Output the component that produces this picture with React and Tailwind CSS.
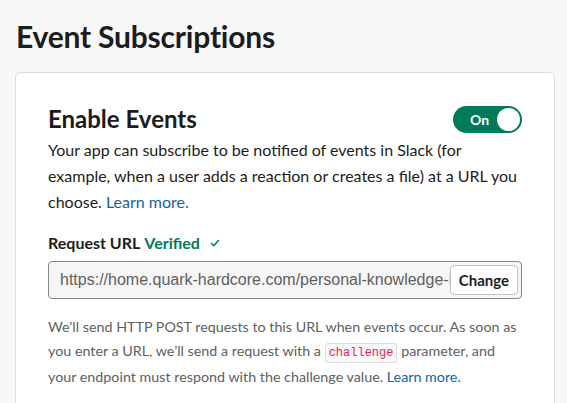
export default function App() {
  return (
    <div className="min-h-screen bg-[#f8f8f8] font-['Lato',sans-serif] text-[#1d1c1d] overflow-hidden h-[403px]">
      <div className="pl-[16px] pr-[12px] pt-[16px]">
        <h1 className="text-[30px] font-bold leading-[40px] tracking-[-0.2px]">Event Subscriptions</h1>

        <section className="mt-[16px] bg-white border border-[#dddddd] rounded-[6px] px-[32px] pt-[30px] pb-[40px] ml-[-1px]">
          <div className="flex items-center justify-between">
            <h2 className="text-[24px] font-bold leading-[32px]">Enable Events</h2>
            <button className="flex items-center justify-between w-[69px] h-[27px] rounded-full bg-[#007a5a] pl-[17px] pr-[2px]">
              <span className="text-white text-[14px] font-bold">On</span>
              <span className="w-[23px] h-[23px] rounded-full bg-white" />
            </button>
          </div>

          <p className="mt-[2px] text-[16px] leading-[26px]">
            Your app can subscribe to be notified of events in Slack (for example, when a user adds a
            reaction or creates a file) at a URL you choose.{" "}
            <a className="text-[#1264a3]">Learn more.</a>
          </p>

          <div className="mt-[16px] flex items-center gap-[4px] text-[16px] font-bold leading-[24px]">
            <span>Request URL</span>
            <span className="text-[#007a5a]">Verified</span>
            <svg className="w-[10px] h-[10px] ml-[6px]" viewBox="0 0 10 10" fill="none">
              <path d="M1.5 5.5l2.2 2.2L8.5 2.5" stroke="#007a5a" strokeWidth="1.5" strokeLinecap="round" strokeLinejoin="round" />
            </svg>
          </div>

          <div className="mt-[6px] flex items-center h-[38px] border border-[#868686] rounded-[4px] bg-[#f6f6f6] pl-[11px] pr-[3px]">
            <div className="flex-1 min-w-0 overflow-hidden whitespace-nowrap font-['Liberation_Sans',Arial,sans-serif] text-[16px] text-[#616061]">
              https://home.quark-hardcore.com/personal-knowledge-base/slack/events
            </div>
            <button className="shrink-0 h-[30px] px-[8px] bg-white border border-[#c4c4c4] rounded-[4px] text-[15px] font-bold">
              Change
            </button>
          </div>

          <p className="mt-[16px] mr-[-4px] text-[14.3px] leading-[24px] text-[#616061]">
            We’ll send HTTP POST requests to this URL when events occur. As soon as you enter a URL,
            we’ll send a request with a{" "}
            <code className="font-['Liberation_Mono',monospace] text-[12px] text-[#e01e5a] bg-[#f8f8f8] border border-[#dddddd] rounded-[3px] px-[3px] py-[2px]">
              challenge
            </code>{" "}
            parameter, and your endpoint must respond with the challenge value.{" "}
            <a className="text-[#1264a3]">Learn more.</a>
          </p>
        </section>
      </div>
    </div>
  );
}
